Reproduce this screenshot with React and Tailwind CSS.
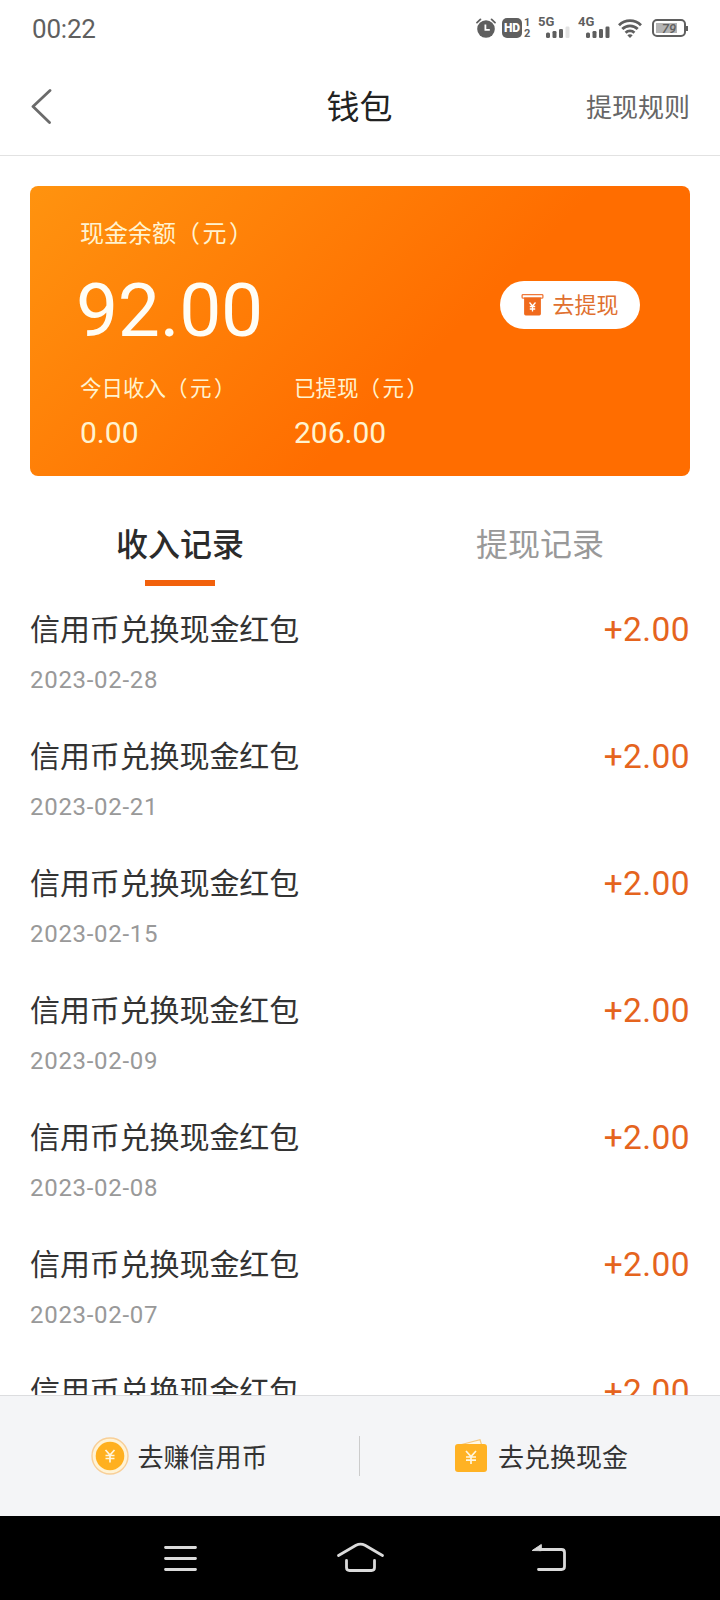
const records = [
  { date: "2023-02-28", amount: "+2.00" },
  { date: "2023-02-21", amount: "+2.00" },
  { date: "2023-02-15", amount: "+2.00" },
  { date: "2023-02-09", amount: "+2.00" },
  { date: "2023-02-08", amount: "+2.00" },
  { date: "2023-02-07", amount: "+2.00" },
  { amount: "+2.00" },
];

const AlarmIcon = () => (
  <svg width="20" height="20" viewBox="0 0 20 20" fill="none">
    <circle cx="10" cy="11" r="8.8" fill="#5f5f5f" />
    <path d="M1 4.6 4.4 1.4M19 4.6 15.6 1.4" stroke="#5f5f5f" strokeWidth="1.8" strokeLinecap="round" />
    <path d="M9.4 6.6v5.2h4.4" stroke="#fff" strokeWidth="1.8" />
  </svg>
);

const Signal = ({ label, weak }) => (
  <div className="relative h-5 w-8">
    <span className="absolute left-0 -top-[2px] text-[13px] leading-3 font-bold">{label}</span>
    <svg className="absolute bottom-0 left-2" width="24" height="12" viewBox="0 0 24 12" fill="#5f5f5f">
      <rect x="0" y="6.5" width="4" height="5.5" rx="1.5" />
      <rect x="6.5" y="5" width="4" height="7" rx="1.2" />
      <rect x="13" y="3" width="4" height="9" rx="1.2" />
      <rect x="19.5" y="0.5" width="4" height="11.5" rx="1.2" fill={weak ? "#e2e2e2" : "#5f5f5f"} />
    </svg>
  </div>
);

const WifiIcon = () => (
  <svg width="24" height="19" viewBox="0 0 24 19" fill="none" stroke="#5f5f5f" strokeWidth="2.8">
    <path d="M1 6.2C7.2.1 16.8.1 23 6.2" />
    <path d="M4.3 10.1c4.3-4.3 11.1-4.3 15.4 0" />
    <path d="M7.6 13.8c2.4-2.5 6.4-2.5 8.8 0" />
    <path d="M9.3 16.2c1.5-1.3 3.9-1.3 5.4 0L12 19z" fill="#5f5f5f" stroke="none" />
  </svg>
);

const StatusBar = () => (
  <div className="h-14 shrink-0 pl-8 pr-8 flex items-center justify-between text-[#5f5f5f]">
    <span className="text-[26px] leading-8 pt-px -tracking-[0.2px]">00:22</span>
    <div className="flex items-center">
      <AlarmIcon />
      <span className="ml-[6px] w-5 h-5 rounded-[5px] bg-[#5f5f5f] text-white text-[12px] leading-5 font-black text-center">HD</span>
      <span className="ml-[2px] w-[7px] flex flex-col text-[11px] leading-[11px] font-bold">
        <span>1</span>
        <span>2</span>
      </span>
      <div className="ml-[7px]"><Signal label="5G" weak /></div>
      <div className="ml-2"><Signal label="4G" /></div>
      <div className="ml-2"><WifiIcon /></div>
      <div className="ml-[10px] flex items-center">
        <div className="relative w-[34px] h-[18px] rounded-[5px] border-2 border-[#5f5f5f] overflow-hidden">
          <div className="m-[2px] w-[21px] h-[10px] bg-[#b4b4b4]" />
          <span className="absolute inset-0 text-center text-[13px] leading-[15px] font-medium italic">79</span>
        </div>
        <div className="w-[2px] h-[5px] bg-[#5f5f5f]" />
      </div>
    </div>
  </div>
);

const Header = () => (
  <header className="h-[100px] shrink-0 px-[30px] grid grid-cols-3 items-center border-b border-[#e2e2e2]">
    <svg width="24" height="36" viewBox="0 0 24 36" fill="none" stroke="#6b6b6b" strokeWidth="2.8" strokeLinecap="round" strokeLinejoin="round">
      <path d="M20 2.500 3 18.500 19.500 34.500" />
    </svg>
    <h1 className="pt-[5px] -ml-px text-center text-[33px] leading-10 text-[#222]">钱包</h1>
    <a className="pt-[5px] text-right text-[26px] leading-8 text-[#666]">提现规则</a>
  </header>
);

const WithdrawIcon = () => (
  <svg width="23" height="22" viewBox="0 0 22 22" fill="none">
    <rect x="0.6" y="0.6" width="20.8" height="3.6" rx="1" stroke="#f0793a" strokeWidth="1.3" />
    <path d="M2.6 3.6h16.8v16.2a1.6 1.6 0 0 1-1.6 1.6H4.2a1.6 1.6 0 0 1-1.6-1.6z" fill="#f06a1c" />
    <path d="M8 8.5 11 12l3-3.5M11 12v5.5M8.3 12.5h5.4M8.3 15h5.4" stroke="#fff" strokeWidth="1.3" />
  </svg>
);

const Unit = () => <span className="tracking-[2.5px]">（元）</span>;

const Stat = ({ label, value }) => (
  <div className="w-[214px]">
    <div className="text-[21.5px] leading-8 whitespace-nowrap">
      {label}
      <Unit />
    </div>
    <div className="mt-3 text-[30px] leading-8">{value}</div>
  </div>
);

const BalanceCard = () => (
  <section className="mx-[30px] mt-[30px] h-[290px] shrink-0 rounded-lg px-[50px] text-[#fff3d0] bg-[linear-gradient(135deg,#ff930f_0%,#ff6d00_60%)]">
    <div className="pt-8 text-[24px] leading-8">
      现金余额
      <Unit />
    </div>
    <div className="mt-[23px] h-[76px] flex items-center justify-between">
      <span className="-mt-[2px] -ml-1 text-[75px] leading-[76px] -tracking-[0.3px] text-[#fffdf5]">92.00</span>
      <button className="mb-[12px] w-[140px] h-12 rounded-full bg-white flex items-center justify-center gap-2 text-[22px] text-[#e0702f]">
        <WithdrawIcon />
        <span className="leading-8 pt-[2px]">去提现</span>
      </button>
    </div>
    <div className="mt-6 flex">
      <Stat label="今日收入" value="0.00" />
      <Stat label="已提现" value="206.00" />
    </div>
  </section>
);

const Tabs = () => (
  <div className="mt-[47px] h-[63px] shrink-0 flex text-[32px] leading-11 text-center">
    <div className="w-1/2 flex flex-col items-center justify-between text-[#2b2b2b]">
      <span className="font-medium">收入记录</span>
      <span className="w-[70px] h-[6px] bg-[#f2610c]" />
    </div>
    <div className="w-1/2 text-[#999]">提现记录</div>
  </div>
);

const RecordRow = ({ date, amount }) => (
  <li className="h-[127px] shrink-0 flex justify-between">
    <div>
      <div className="text-[30px] leading-10 -tracking-[0.1px] text-[#333]">信用币兑换现金红包</div>
      {date && <div className="mt-[14px] text-[24px] leading-8 tracking-[0.7px] text-[#999]">{date}</div>}
    </div>
    <div className="text-[33.5px] leading-10 tracking-[0.4px] text-[#e5641e]">{amount}</div>
  </li>
);

const CoinIcon = () => (
  <svg width="38" height="38" viewBox="0 0 38 38" fill="none">
    <circle cx="19" cy="19" r="18" fill="#fff3d6" stroke="#f8cf98" strokeWidth="1.4" />
    <circle cx="19" cy="19" r="14.3" fill="#ffb01f" />
    <path d="M14.5 13 19 18l4.5-5M19 18v7.5M14.5 18.5h9M14.5 21.5h9" stroke="#fff6df" strokeWidth="1.7" />
  </svg>
);

const CashIcon = () => (
  <svg width="34" height="36" viewBox="0 0 34 36" fill="none">
    <path d="M7.5 6.5 26 1.7l1.5 4.8" fill="#fff8e6" stroke="#f5c980" strokeWidth="1.2" />
    <rect x="1" y="6" width="32" height="28" rx="3" fill="#ffb224" />
    <path d="M12 13 17 18.5l5-5.5M17 18.5V26M12 19h10M12 22.2h10" stroke="#fff6df" strokeWidth="1.7" />
  </svg>
);

const BottomBar = () => (
  <div className="h-[121px] shrink-0 border-t border-[#dcdddf] bg-[#f4f5f7] flex items-center text-[26px] text-[#333]">
    <button className="w-[359px] flex items-center justify-center gap-2">
      <CoinIcon />
      <span className="leading-8 pt-[3px]">去赚信用币</span>
    </button>
    <div className="w-px h-10 bg-[#ccc]" />
    <button className="flex-1 pl-[2px] flex items-center justify-center gap-[10px]">
      <CashIcon />
      <span className="leading-8 pt-[3px]">去兑换现金</span>
    </button>
  </div>
);

const SystemNav = () => (
  <div className="h-[84px] shrink-0 bg-black">
    <svg width="720" height="84" viewBox="0 0 720 84" fill="none" stroke="#dadada" strokeWidth="2.8" strokeLinecap="round" strokeLinejoin="round">
      <path d="M165.5 31.5h30M165.5 42.5h30M165.5 53.5h30" />
      <path d="M338.5 39.5 356 29.3Q360.5 27 365 29.3L382.5 39.5" />
      <path d="M346.5 44.5v7q0 3 3 3h22q3 0 3-3v-7" />
      <path d="M540 33.5h21.5q3 0 3 3v14q0 3-3 3h-23" />
      <path d="M532.5 34.3 541.3 28.5v5.8z" fill="#dadada" strokeWidth="1" />
    </svg>
  </div>
);

export default function App() {
  return (
    <div className="w-[720px] h-[1600px] flex flex-col overflow-hidden bg-white font-[Roboto,'Noto_Sans_CJK_SC',sans-serif]">
      <StatusBar />
      <Header />
      <BalanceCard />
      <Tabs />
      <ul className="flex-1 min-h-0 overflow-hidden flex flex-col px-[30px] pt-6">
        {records.map((r, i) => (
          <RecordRow key={i} {...r} />
        ))}
      </ul>
      <BottomBar />
      <SystemNav />
    </div>
  );
}
